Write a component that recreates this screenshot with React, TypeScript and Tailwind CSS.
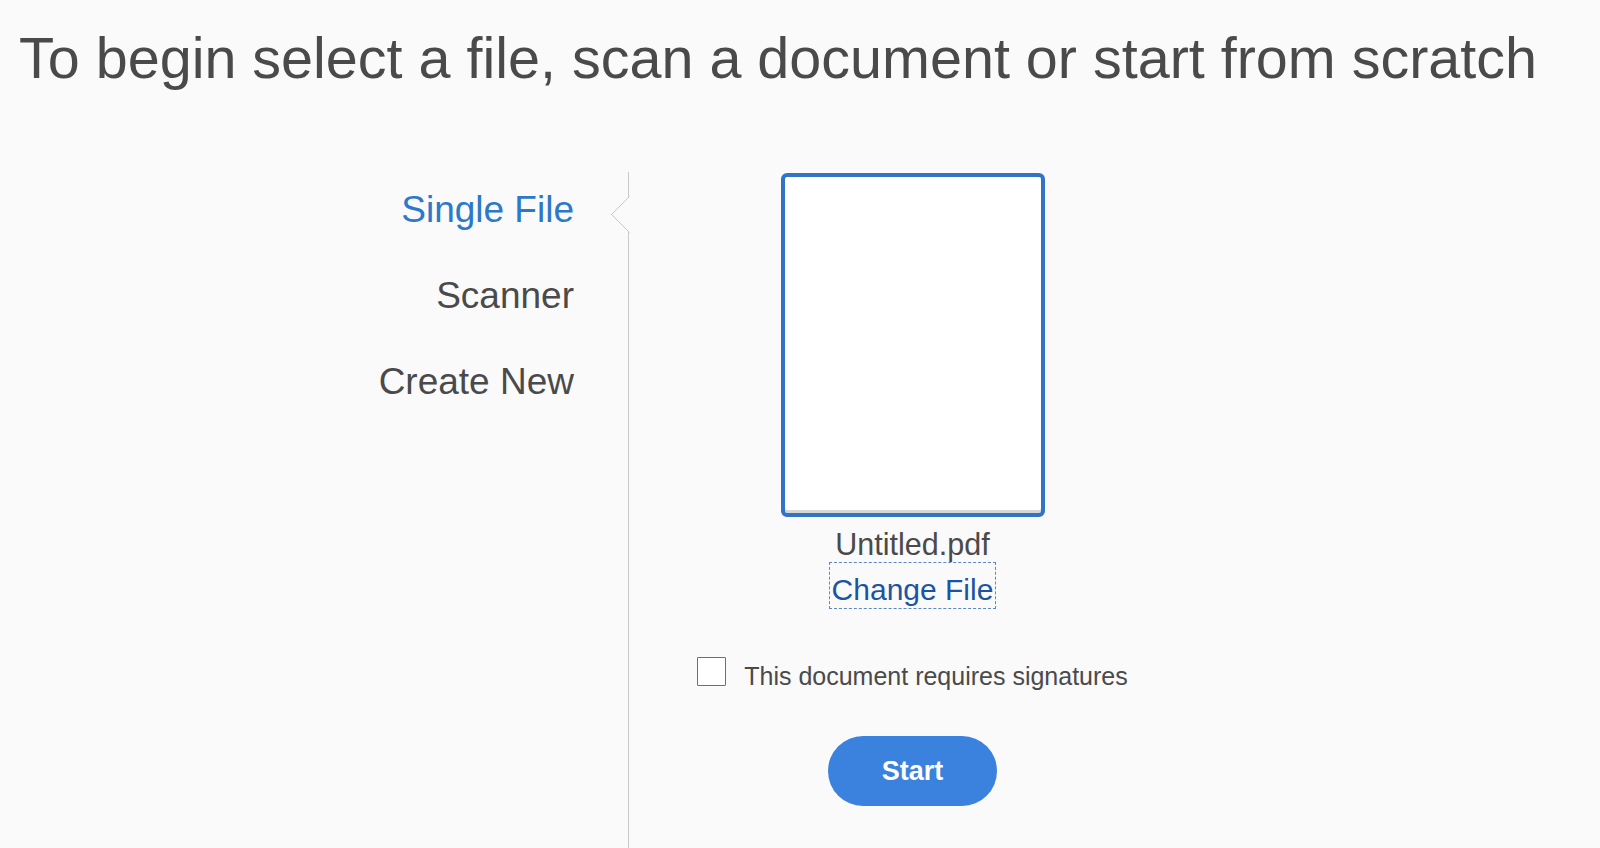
import { useState } from 'react';

const NAV = ['Single File', 'Scanner', 'Create New'];

function Notch() {
  // the little "<" break in the divider that points at the active tab
  return (
    <svg
      className="absolute left-[-19px] top-[24px]"
      width="20"
      height="38"
      viewBox="0 0 20 38"
    >
      <path d="M19.5 0.5 L1.5 18.5 L19.5 36.5" fill="#fafafa" stroke="#c9c9c9" strokeWidth="1" />
    </svg>
  );
}

export default function App() {
  const [active] = useState(0);
  const [needsSig, setNeedsSig] = useState(false);

  return (
    <div
      className="h-[848px] w-full overflow-hidden bg-[#fafafa] text-[#4a4a4a]"
      style={{ fontFamily: '"Liberation Sans", Arial, Helvetica, sans-serif' }}
    >
      <h1 className="pl-[19px] pt-[24px] text-[57.5px] leading-[68px] font-normal whitespace-nowrap">
        To begin select a file, scan a document or start from scratch
      </h1>

      <div className="mt-[80px] flex h-[676px]">
        <nav className="flex w-[628px] flex-col items-end gap-[46px] pr-[54px] pt-[18px]">
          {NAV.map((item, i) => (
            <button
              key={item}
              className={
                'text-[37px] leading-[40px] ' +
                (i === active ? 'text-[#2c78c9]' : 'text-[#4a4a4a]')
              }
            >
              {item}
            </button>
          ))}
        </nav>

        <div className="relative flex w-[568px] flex-col items-center border-l border-[#c9c9c9]">
          <Notch />

          <div className="mt-[1px] h-[344px] w-[264px] rounded-[6px] border-4 border-[#3174c6] bg-white shadow-[inset_0_-3px_0_#d6d6d6]" />

          <div className="mt-[10px] text-[30.5px] leading-[35px] text-[#4a4a4a]">Untitled.pdf</div>
          <button className="border border-dashed border-[#5d86c4] px-[2px] pt-[9px] text-[30px] leading-[36px] text-[#1b54a4]">
            Change File
          </button>

          <label className="mt-[48px] flex cursor-pointer items-start gap-[18px]">
            <input
              type="checkbox"
              checked={needsSig}
              onChange={(e) => setNeedsSig(e.target.checked)}
              className="sr-only"
            />
            <span className="h-[29px] w-[29px] rounded-[1px] border-[1.5px] border-[#6e6e6e] bg-white" />
            <span className="mt-[4px] text-[25px] leading-[30px] text-[#4a4a4a]">
              This document requires signatures
            </span>
          </label>

          <button className="mt-[45px] flex h-[70px] w-[169px] items-center justify-center rounded-full bg-[#3b81de] text-[27px] font-bold text-white">
            Start
          </button>
        </div>
      </div>
    </div>
  );
}
